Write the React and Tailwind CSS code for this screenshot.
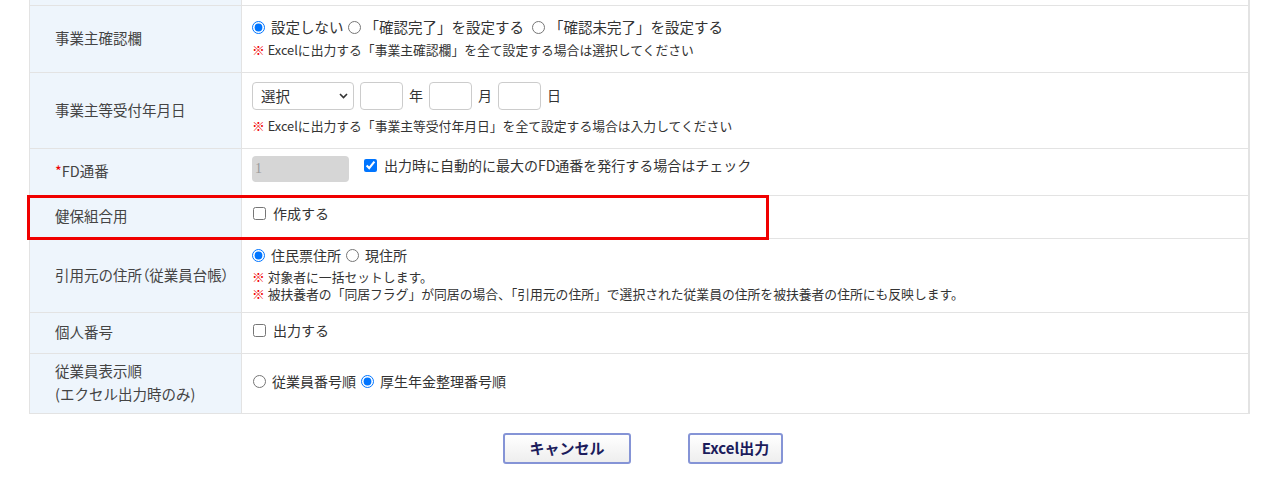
import { useState } from 'react';

const font = { fontFamily: '"Noto Sans CJK JP", "Noto Sans", sans-serif' };

function Note({ children }) {
    return (
        <p className="text-[12.8px] leading-[17px] text-[#333]">
            <span className="text-[#f00000]">※</span> {children}
        </p>
    );
}

function Row({ label, children, className = '', contentClass = '' }) {
    return (
        <div className={`relative grid grid-cols-[212px_1fr] border-t border-[#e3e3e3] ${className}`}>
            <div className="flex items-center bg-[#eef5fc] border-r border-[#e3e3e3] pl-[25px] pb-[3px] text-[14.5px] leading-[23px] text-[#444]">
                {label}
            </div>
            <div className={`flex flex-col justify-center pl-[10px] pb-[3px] text-[14px] text-[#333] ${contentClass}`}>
                {children}
            </div>
        </div>
    );
}

function Radio({ name, checked, onChange, className = '' }) {
    return (
        <input
            type="radio"
            name={name}
            checked={checked}
            onChange={onChange}
            className={`m-0 w-[13px] h-[13px] shrink-0 ${className}`}
        />
    );
}

export default function App() {
    const [confirm, setConfirm] = useState('none');
    const [addr, setAddr] = useState('jumin');
    const [order, setOrder] = useState('pension');
    const [autoFd, setAutoFd] = useState(true);
    const [kenpo, setKenpo] = useState(false);
    const [myNumber, setMyNumber] = useState(false);

    return (
        <div className="w-[1280px] h-[487px] bg-white overflow-hidden" style={font}>
            <div className="ml-[29px] w-[1221px] border-l border-r-2 border-b border-[#e3e3e3]">
                {/* tail of the row above */}
                <div className="grid grid-cols-[212px_1fr] h-[5px]">
                    <div className="bg-[#eef5fc] border-r border-[#e3e3e3]" />
                    <div />
                </div>

                {/* 事業主確認欄 */}
                <Row label="事業主確認欄" className="h-[67px]" contentClass="gap-[4px]">
                    <div className="flex items-center leading-[20px] text-[14.5px]">
                        <Radio name="confirm" checked={confirm === 'none'} onChange={() => setConfirm('none')} className="mr-[6px]" />
                        <span>設定しない</span>
                        <Radio name="confirm" checked={confirm === 'done'} onChange={() => setConfirm('done')} className="ml-[4px] mr-[4px]" />
                        <span>「確認完了」を設定する</span>
                        <Radio name="confirm" checked={confirm === 'undone'} onChange={() => setConfirm('undone')} className="ml-[8px] mr-[4px]" />
                        <span>「確認未完了」を設定する</span>
                    </div>
                    <Note>Excelに出力する「事業主確認欄」を全て設定する場合は選択してください</Note>
                </Row>

                {/* 事業主等受付年月日 */}
                <Row label="事業主等受付年月日" className="h-[76px]" contentClass="gap-[7px] pb-[6px]">
                    <div className="flex items-center gap-[6px]">
                        <div className="relative">
                            <select className="appearance-none w-[102px] h-[28px] pl-[8px] border border-[#ccc] rounded-[4px] bg-white text-[14.5px] text-[#333]">
                                <option>選択</option>
                                <option>令和</option>
                                <option>平成</option>
                            </select>
                            <svg className="pointer-events-none absolute right-[6px] top-[11px]" width="9" height="6" viewBox="0 0 9 6">
                                <path d="M1 1l3.5 3.5L8 1" fill="none" stroke="#333" strokeWidth="1.6" />
                            </svg>
                        </div>
                        <input type="text" className="w-[43px] h-[28px] border border-[#ccc] rounded-[4px]" />
                        <span>年</span>
                        <input type="text" className="w-[43px] h-[28px] border border-[#ccc] rounded-[4px]" />
                        <span>月</span>
                        <input type="text" className="w-[43px] h-[28px] border border-[#ccc] rounded-[4px]" />
                        <span>日</span>
                    </div>
                    <Note>Excelに出力する「事業主等受付年月日」を全て設定する場合は入力してください</Note>
                </Row>

                {/* FD通番 */}
                <Row
                    label={<span><span className="text-[#f00000]">*</span>FD通番</span>}
                    className="h-[47px]"
                    contentClass="pb-[6px]"
                >
                    <div className="flex items-start">
                        <input
                            type="text"
                            disabled
                            value="1"
                            readOnly
                            className="w-[97px] h-[26px] px-[3px] rounded-[4px] bg-[#d6d6d6] text-[#9a9a9a] text-[14px]"
                            style={{ fontFamily: '"Liberation Serif", serif' }}
                        />
                        <input type="checkbox" checked={autoFd} onChange={(e) => setAutoFd(e.target.checked)} className="m-0 mt-[3px] ml-[15px] mr-[7px] w-[13px] h-[13px]" />
                        <span className="leading-[19px]">出力時に自動的に最大のFD通番を発行する場合はチェック</span>
                    </div>
                </Row>

                {/* 健保組合用 */}
                <Row label="健保組合用" className="h-[43px]" contentClass="pb-[7px]">
                    <div className="flex items-center">
                        <input type="checkbox" checked={kenpo} onChange={(e) => setKenpo(e.target.checked)} className="m-0 ml-px mr-[7px] w-[13px] h-[13px]" />
                        <span>作成する</span>
                    </div>
                    <div className="pointer-events-none absolute z-10 left-[-3px] top-[-1px] w-[742px] h-[45px] border-[3px] border-[#f00000]" />
                </Row>

                {/* 引用元の住所 */}
                <Row
                    label={<span>引用元の住所<span className="[font-feature-settings:'palt']">（</span>従業員台帳<span className="[font-feature-settings:'palt']">）</span></span>}
                    className="h-[74px]"
                    contentClass="pb-[4px]"
                >
                    <div className="flex items-center leading-[20px] mb-[3px]">
                        <Radio name="addr" checked={addr === 'jumin'} onChange={() => setAddr('jumin')} className="mr-[6px]" />
                        <span>住民票住所</span>
                        <Radio name="addr" checked={addr === 'current'} onChange={() => setAddr('current')} className="ml-[5px] mr-[6px]" />
                        <span>現住所</span>
                    </div>
                    <Note>対象者に一括セットします。</Note>
                    <Note>被扶養者の「同居フラグ」が同居の場合、「引用元の住所」で選択された従業員の住所を被扶養者の住所にも反映します。</Note>
                </Row>

                {/* 個人番号 */}
                <Row label="個人番号" className="h-[41px]" contentClass="pb-[6px]">
                    <div className="flex items-center">
                        <input type="checkbox" checked={myNumber} onChange={(e) => setMyNumber(e.target.checked)} className="m-0 ml-px mr-[7px] w-[13px] h-[13px]" />
                        <span>出力する</span>
                    </div>
                </Row>

                {/* 従業員表示順 */}
                <Row
                    label={<span>従業員表示順<br />(エクセル出力時のみ)</span>}
                    className="h-[60px]"
                    contentClass="pb-[5px]"
                >
                    <div className="flex items-center leading-[20px]">
                        <Radio name="order" checked={order === 'emp'} onChange={() => setOrder('emp')} className="ml-px mr-[6px]" />
                        <span>従業員番号順</span>
                        <Radio name="order" checked={order === 'pension'} onChange={() => setOrder('pension')} className="ml-[5px] mr-[6px]" />
                        <span>厚生年金整理番号順</span>
                    </div>
                </Row>
            </div>

            {/* Buttons */}
            <div className="flex justify-center gap-[57px] mt-[19px] pl-[6px]">
                <button className="w-[128px] h-[31px] border-2 border-[#8594d6] rounded-[3px] bg-gradient-to-b from-white to-[#eeeeee] text-[15px] font-bold text-[#1c1c5c]">
                    キャンセル
                </button>
                <button className="w-[95px] h-[31px] border-2 border-[#8594d6] rounded-[3px] bg-gradient-to-b from-white to-[#eeeeee] text-[15px] font-bold text-[#1c1c5c]">
                    Excel出力
                </button>
            </div>
        </div>
    );
}
